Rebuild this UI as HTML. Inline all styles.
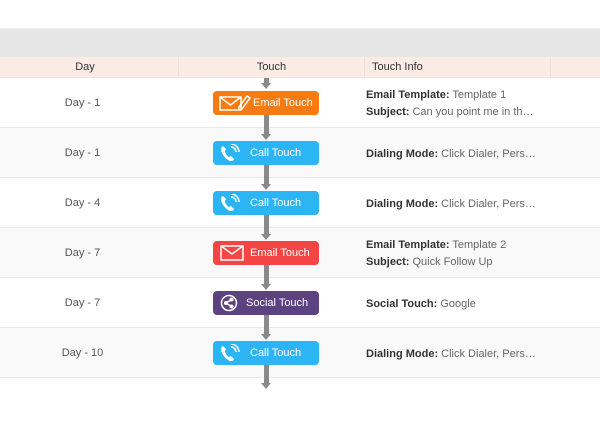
<!DOCTYPE html>
<html><head><style>
*{margin:0;padding:0;box-sizing:border-box}
body{width:600px;height:427px;background:#fff;font-family:"Liberation Sans",Arial,sans-serif;position:relative;overflow:hidden}
.band{position:absolute;left:0;top:28px;width:600px;height:29px;background:#e6e6e6;border-top:1px solid #ececec}
.hdr{position:absolute;left:0;top:57px;width:600px;height:21px;background:#faebe5;border-bottom:1px solid #efe3de;font-size:11px;color:#333}
.hdr div{position:absolute;top:0;height:20px;line-height:20px;border-right:1px solid #ece0db}
.row{position:absolute;left:0;width:600px;height:50px;border-bottom:1px solid #e8ecef;font-size:11px}
.day{position:absolute;left:0;width:165px;text-align:center;top:19px;color:#555}
.info{position:absolute;left:366px;color:#666;line-height:17px}
.info b{color:#333;font-weight:bold}
.btn{position:absolute;left:213px;width:106px;height:24px;border-radius:4px;color:#fff;font-size:11px;line-height:25px}
.btn span{position:absolute;left:37px}
.btn svg{position:absolute;left:6px;top:3px}
.stem{position:absolute;left:264px;width:5px;background:#8a8a8a}
.head{position:absolute;left:261px;width:0;height:0;border-left:5.5px solid transparent;border-right:5.5px solid transparent;border-top:6px solid #8a8a8a}
</style></head><body>
<div class="band"></div>
<div class="hdr">
<div style="left:0;width:170px;text-align:center;border-right:none"></div>
<div style="left:0;width:170px;text-align:center;border-right:none">Day</div>
<div style="left:0;width:179px"></div>
<div style="left:179px;width:186px;text-align:center">Touch</div>
<div style="left:365px;width:186px;padding-left:7px">Touch Info</div>
</div>

<div class="row" style="top:78px;background:#fff"><div class="day">Day - 1</div><div class="info" style="top:9px"><b>Email Template:</b> Template 1<br><b>Subject:</b> Can you point me in th…</div></div>
<div class="row" style="top:128px;background:#f9f9f9"><div class="day">Day - 1</div><div class="info" style="top:18px"><b>Dialing Mode:</b> Click Dialer, Pers…</div></div>
<div class="row" style="top:178px;background:#fff"><div class="day">Day - 4</div><div class="info" style="top:18px"><b>Dialing Mode:</b> Click Dialer, Pers…</div></div>
<div class="row" style="top:228px;background:#f9f9f9"><div class="day">Day - 7</div><div class="info" style="top:9px"><b>Email Template:</b> Template 2<br><b>Subject:</b> Quick Follow Up</div></div>
<div class="row" style="top:278px;background:#fff"><div class="day">Day - 7</div><div class="info" style="top:18px"><b>Social Touch:</b> Google</div></div>
<div class="row" style="top:328px;background:#f9f9f9"><div class="day">Day - 10</div><div class="info" style="top:18px"><b>Dialing Mode:</b> Click Dialer, Pers…</div></div>

<div class="stem" style="top:78px;height:6px"></div><div class="head" style="top:83px"></div>
<div class="stem" style="top:115px;height:20px"></div><div class="head" style="top:134px"></div>
<div class="stem" style="top:165px;height:20px"></div><div class="head" style="top:184px"></div>
<div class="stem" style="top:215px;height:20px"></div><div class="head" style="top:234px"></div>
<div class="stem" style="top:265px;height:20px"></div><div class="head" style="top:284px"></div>
<div class="stem" style="top:315px;height:20px"></div><div class="head" style="top:334px"></div>
<div class="stem" style="top:365px;height:19px"></div><div class="head" style="top:383px"></div>

<div class="btn" style="top:91px;background:#f57b12"><svg width="32" height="18" viewBox="0 0 32 18" fill="none" stroke="#fff" stroke-width="1.5"><rect x="1" y="3" width="21" height="13"/><path d="M1 3l10.5 8 10.5-8"/><path d="M20 13l8-11 3 2-8 11-3 1z"/></svg><span style="left:40px">Email Touch</span></div>
<div class="btn" style="top:141px;background:#2bb5f5"><svg width="22" height="18" viewBox="0 0 22 18" fill="#fff"><path d="M4 2c-2 1-3 3-1 7s6 8 9 8c2 0 3-1 3-2l-3-3-2 1c-2-1-4-4-4-6l1-2-3-3z"/><path d="M12 3a5 5 0 0 1 5 5M12 0a8 8 0 0 1 8 8" stroke="#fff" stroke-width="1.5" fill="none"/></svg><span>Call Touch</span></div>
<div class="btn" style="top:191px;background:#2bb5f5"><svg width="22" height="18" viewBox="0 0 22 18" fill="#fff"><path d="M4 2c-2 1-3 3-1 7s6 8 9 8c2 0 3-1 3-2l-3-3-2 1c-2-1-4-4-4-6l1-2-3-3z"/><path d="M12 3a5 5 0 0 1 5 5M12 0a8 8 0 0 1 8 8" stroke="#fff" stroke-width="1.5" fill="none"/></svg><span>Call Touch</span></div>
<div class="btn" style="top:241px;background:#f44444"><svg width="26" height="18" viewBox="0 0 26 18" fill="none" stroke="#fff" stroke-width="1.5"><rect x="2" y="2" width="22" height="14"/><path d="M2 2l11 8 11-8"/></svg><span>Email Touch</span></div>
<div class="btn" style="top:291px;background:#5c4280"><svg width="20" height="18" viewBox="0 0 20 18" fill="none" stroke="#fff" stroke-width="1.5"><circle cx="10" cy="9" r="7.5"/><circle cx="12.5" cy="5.5" r="1.3" fill="#fff"/><circle cx="7" cy="9" r="1.3" fill="#fff"/><circle cx="12.5" cy="12.5" r="1.3" fill="#fff"/><path d="M12.5 5.5L7 9l5.5 3.5"/></svg><span style="left:33px">Social Touch</span></div>
<div class="btn" style="top:341px;background:#2bb5f5"><svg width="22" height="18" viewBox="0 0 22 18" fill="#fff"><path d="M4 2c-2 1-3 3-1 7s6 8 9 8c2 0 3-1 3-2l-3-3-2 1c-2-1-4-4-4-6l1-2-3-3z"/><path d="M12 3a5 5 0 0 1 5 5M12 0a8 8 0 0 1 8 8" stroke="#fff" stroke-width="1.5" fill="none"/></svg><span>Call Touch</span></div>
</body></html>
